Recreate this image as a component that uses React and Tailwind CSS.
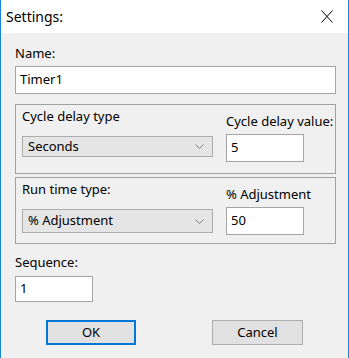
import React from "react";

const Chevron = () => (
  <svg width="9" height="5" viewBox="0 0 9 5" className="shrink-0">
    <path d="M0.5 0.5 L4.5 4.5 L8.5 0.5" fill="none" stroke="#7a7a7a" strokeWidth="1" />
  </svg>
);

const Combo = ({ value, h }) => (
  <div className={`mt-[12px] w-[191px] ${h} flex items-center justify-between bg-[#e5e5e5] border border-[#acacac] pl-[5px] pr-[8px]`}>
    <span>{value}</span>
    <Chevron />
  </div>
);

const TextBox = ({ value, w, h, className = "" }) => (
  <div className={`${w} ${h} ${className} flex items-center bg-white border border-[#a5a5a5] pl-[4px]`}>
    {value}
  </div>
);

const GroupBox = ({ h, left, combo, comboH, right, value }) => (
  <div className={`${h} border border-[#a0a0a0] pl-[6px] flex gap-[13px]`}>
    <div className="flex flex-col pt-[4px]">
      <span className="leading-[15px]">{left}</span>
      <Combo value={combo} h={comboH} />
    </div>
    <div className="flex flex-col pt-[9px]">
      <span className="leading-[15px] whitespace-nowrap">{right}</span>
      <TextBox value={value} w="w-[78px]" h="h-[28px]" className="mt-[5px]" />
    </div>
  </div>
);

export default function App() {
  return (
    <div
      className="w-[349px] h-[358px] bg-[#f0f0f0] border-x border-[#1883d7] flex flex-col text-[13px] text-black"
      style={{ fontFamily: '"Noto Sans", "Liberation Sans", sans-serif' }}
    >
      <div className="h-[33px] shrink-0 bg-white flex items-center justify-between pl-[5px] pr-[15px]">
        <span className="text-[14px] leading-[18px]">Settings:</span>
        <svg width="12" height="13" viewBox="0 0 12 13">
          <path d="M0.5 0.5 L11.5 12.5 M11.5 0.5 L0.5 12.5" stroke="#000" strokeWidth="1" />
        </svg>
      </div>

      <div className="flex flex-col pl-[14px] pr-[12px]">
        <span className="mt-[13px] leading-[15px]">Name:</span>
        <TextBox value="Timer1" w="w-full" h="h-[28px]" className="mt-[5px]" />

        <div className="mt-[10px]">
          <GroupBox
            h="h-[70px]"
            left="Cycle delay type"
            combo="Seconds"
            comboH="h-[21px]"
            right="Cycle delay value:"
            value="5"
          />
        </div>
        <div className="mt-[3px]">
          <GroupBox
            h="h-[67px]"
            left="Run time type:"
            combo="% Adjustment"
            comboH="h-[24px]"
            right="% Adjustment"
            value="50"
          />
        </div>

        <span className="mt-[11px] leading-[15px]">Sequence:</span>
        <TextBox value="1" w="w-[78px]" h="h-[26px]" className="mt-[6px]" />

        <div className="mt-[18px] flex">
          <button className="ml-[31px] w-[90px] h-[25px] bg-[#e1e1e1] border-2 border-[#0078d7] flex items-center justify-center">
            OK
          </button>
          <button className="ml-[76px] w-[91px] h-[25px] bg-[#e1e1e1] border border-[#adadad] flex items-center justify-center">
            Cancel
          </button>
        </div>
      </div>
    </div>
  );
}
